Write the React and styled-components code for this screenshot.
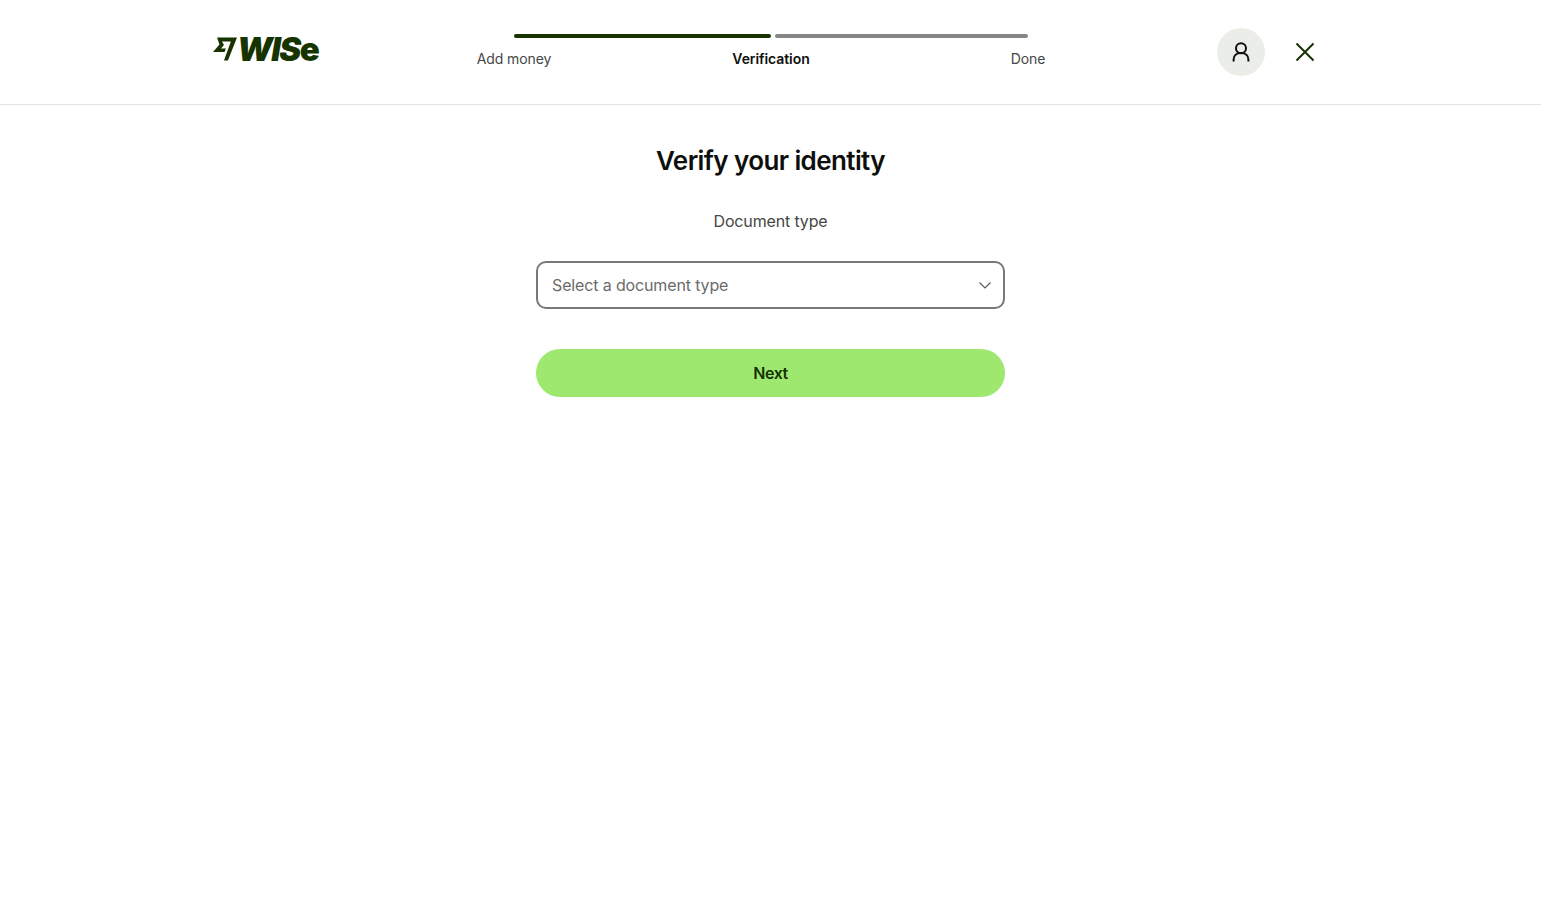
import React from "react"
import styled, { createGlobalStyle } from 'styled-components';

const GlobalStyle = createGlobalStyle`
  html, body {
    margin: 0;
    padding: 0;
    background: #fff;
    font-family: Inter, "Noto Sans", sans-serif;
  }
`;

const Page = styled.div`
  min-height: 911px;
  background: #fff;
`;

const Header = styled.header`
  height: 104px;
  border-bottom: 1px solid #e2e2e0;
  display: grid;
  padding-left: 213px;
  grid-template-columns: 301px 514px 1fr;
`;

const Logo = styled.a`
  display: flex;
  align-items: center;
  height: 30px;
  margin-top: 34px;
  color: #163300;
`;

const LogoText = styled.span`
  font-family: Inter, sans-serif;
  font-size: 33px;
  font-weight: 900;
  font-style: italic;
  line-height: 30px;
  letter-spacing: -1.5px;
`;

const LogoTail = styled.span`
  font-style: normal;
`;

const Stepper = styled.div`
  padding-top: 34px;
`;

const Track = styled.div`
  display: flex;
  gap: 4px;
`;

const Bar = styled.div`
  height: 4px;
  border-radius: 2px;
  width: ${p => p.$width}px;
  background: ${p => p.$done ? '#163300' : '#868685'};
`;

const StepLabels = styled.div`
  display: flex;
  justify-content: space-between;
  margin-top: 12px;
`;

const StepLabel = styled.div`
  width: 0;
  display: flex;
  justify-content: center;
  white-space: nowrap;
  font-size: 14px;
  line-height: 18px;
  letter-spacing: -0.08px;
  font-weight: ${p => p.$active ? 600 : 400};
  color: ${p => p.$active ? '#0e0f0c' : '#454745'};
`;

const Actions = styled.div`
  display: flex;
  align-items: center;
  gap: 20px;
  padding-left: 189px;
`;

const Avatar = styled.button`
  width: 48px;
  height: 48px;
  border: 0;
  padding: 0;
  border-radius: 50%;
  background: #ebede9;
  display: flex;
  align-items: center;
  justify-content: center;
`;

const CloseButton = styled.button`
  width: 40px;
  height: 40px;
  border: 0;
  padding: 0;
  background: none;
  display: flex;
  align-items: center;
  justify-content: center;
`;

const Main = styled.main`
  width: 469px;
  margin: 0 auto;
  padding-top: 40px;
  display: flex;
  flex-direction: column;
  align-items: center;
`;

const Title = styled.h1`
  margin: 0;
  font-size: 26px;
  line-height: 32px;
  font-weight: 600;
  letter-spacing: -0.6px;
  color: #0e0f0c;
`;

const FieldLabel = styled.div`
  margin-top: 32px;
  font-size: 16px;
  line-height: 24px;
  letter-spacing: -0.15px;
  color: #454745;
`;

const Select = styled.div`
  margin-top: 28px;
  width: 100%;
  height: 48px;
  box-sizing: border-box;
  border: 2px solid #777976;
  border-radius: 10px;
  padding: 0 10px 0 14px;
  display: flex;
  align-items: center;
  justify-content: space-between;
  font-size: 16px;
  letter-spacing: -0.14px;
  color: #6a6c6a;
`;

const NextButton = styled.button`
  margin-top: 40px;
  width: 100%;
  height: 48px;
  border: 0;
  border-radius: 24px;
  background: #9fe870;
  font-family: inherit;
  font-size: 16px;
  font-weight: 600;
  letter-spacing: -0.4px;
  color: #163300;
`;

const App = () => {
  return (
    <Page>
      <GlobalStyle />
      <Header>
        <Logo>
          <svg width="24" height="24" viewBox="0 0 24 24" fill="#163300">
            <path d="M6.488 7.469 0 15.05h11.585l1.301-3.576H7.922l3.033-3.507.01-.092L8.993 4.48h8.873l-6.878 18.925h3.925L24 .595H3.998l2.49 6.874Z" />
          </svg>
          <LogoText>WIS<LogoTail>e</LogoTail></LogoText>
        </Logo>
        <Stepper>
          <Track>
            <Bar $done $width={257} />
            <Bar $width={253} />
          </Track>
          <StepLabels>
            <StepLabel>Add money</StepLabel>
            <StepLabel $active>Verification</StepLabel>
            <StepLabel>Done</StepLabel>
          </StepLabels>
        </Stepper>
        <Actions>
          <Avatar>
            <svg width="24" height="24" viewBox="0 0 24 24" fill="none" stroke="#0e0f0c" strokeWidth="2">
              <circle cx="12" cy="8.2" r="5" />
              <path d="M4.6 21.5 v-2 c0-4 3-6.5 7.4-6.5 s7.4 2.5 7.4 6.5 V21.5" />
            </svg>
          </Avatar>
          <CloseButton>
            <svg width="24" height="24" viewBox="0 0 24 24" fill="none" stroke="#163300" strokeWidth="2">
              <path d="M3.5 3.5 L20.5 20.5 M20.5 3.5 L3.5 20.5" />
            </svg>
          </CloseButton>
        </Actions>
      </Header>
      <Main>
        <Title>Verify your identity</Title>
        <FieldLabel>Document type</FieldLabel>
        <Select>
          Select a document type
          <svg width="16" height="16" viewBox="0 0 16 16" fill="none" stroke="#5a5c5a" strokeWidth="1.2">
            <path d="M2.5 5.5 L8 11 L13.5 5.5" />
          </svg>
        </Select>
        <NextButton>Next</NextButton>
      </Main>
    </Page>
  )
}

export default App
